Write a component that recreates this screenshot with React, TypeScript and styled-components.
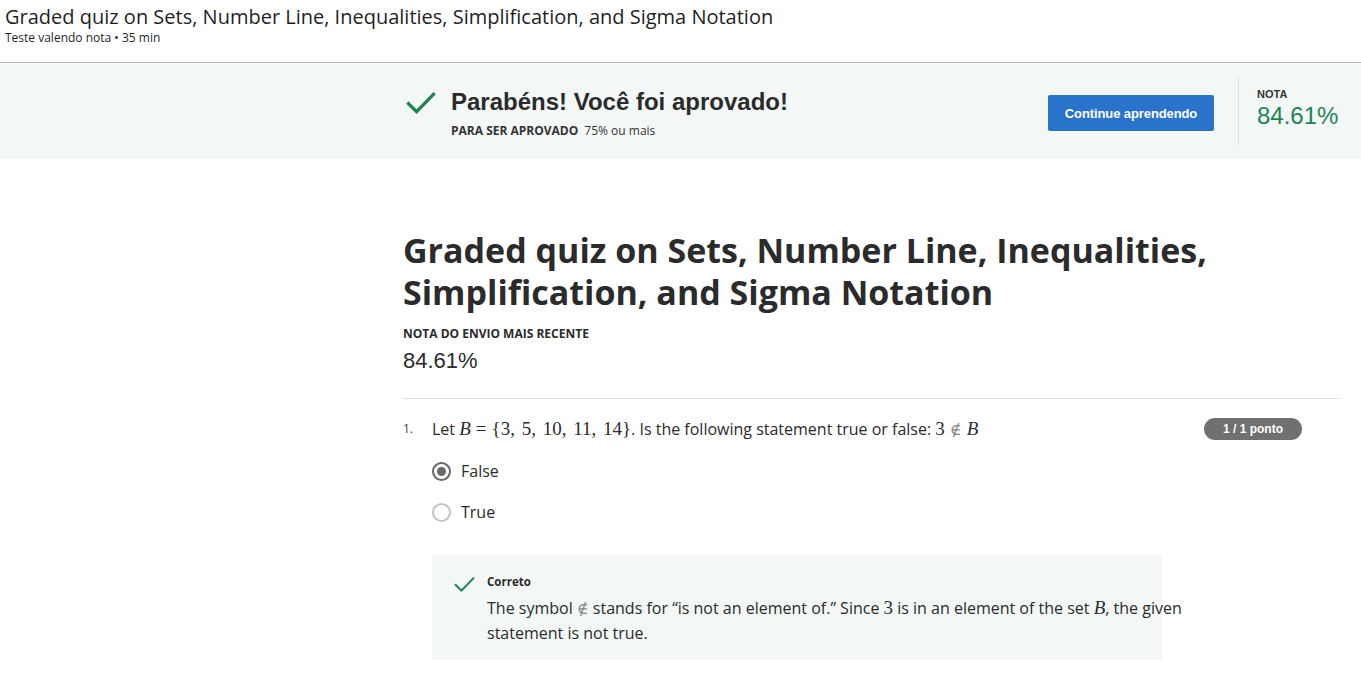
import React from "react";
import styled, { createGlobalStyle } from "styled-components";

const Global = createGlobalStyle`
  html, body { margin: 0; padding: 0; background: #fff; }
  body { font-family: "Open Sans", "Noto Sans", sans-serif; color: #1f1f1f; }
  * { box-sizing: border-box; }
`;

const Page = styled.div`
  width: 1361px;
  min-height: 673px;
  overflow: hidden;
`;

const Header = styled.header`
  height: 63px;
  padding: 3px 0 0 5px;
  border-bottom: 1px solid #b8b8b8;
`;

const HeaderTitle = styled.h1`
  margin: 0;
  font-size: 20px;
  font-weight: 400;
  line-height: 27px;
  color: #1f1f1f;
`;

const HeaderMeta = styled.div`
  font-size: 12px;
  line-height: 16px;
  color: #1f1f1f;
`;

const Banner = styled.section`
  height: 96px;
  background: #f3f8f7;
  display: flex;
  align-items: center;
  padding-left: 406px;
`;

const BannerMain = styled.div`
  display: flex;
  align-items: flex-start;
  gap: 15px;
  width: 642px;
  padding-top: 4px;
`;

const BannerText = styled.div`
  display: flex;
  flex-direction: column;
`;

const BannerHeading = styled.div`
  font-family: "Liberation Sans", Arial, sans-serif;
  font-weight: 700;
  font-size: 24px;
  line-height: 28px;
  color: #2b2b2b;
`;

const BannerSub = styled.div`
  margin-top: 7px;
  font-size: 12px;
  line-height: 16px;
  color: #333;
  b { font-weight: 700; margin-right: 6px; }
`;

const PrimaryButton = styled.button`
  margin-top: 4px;
  width: 166px;
  height: 36px;
  border: none;
  border-radius: 2px;
  background: #2a73cc;
  color: #fff;
  font-family: "Liberation Sans", Arial, sans-serif;
  font-weight: 700;
  font-size: 13px;
  letter-spacing: -0.1px;
  cursor: pointer;
`;

const GradeBox = styled.div`
  margin-left: 24px;
  height: 68px;
  border-left: 1px solid #dde3e1;
  padding: 11px 0 0 18px;
  display: flex;
  flex-direction: column;
`;

const GradeLabel = styled.div`
  font-family: "Liberation Sans", Arial, sans-serif;
  font-weight: 700;
  font-size: 11px;
  line-height: 12px;
  color: #333;
`;

const GradeValue = styled.div`
  margin-top: 2px;
  font-family: "Liberation Sans", Arial, sans-serif;
  font-size: 24px;
  line-height: 28px;
  color: #1f8354;
`;

const Content = styled.main`
  margin-left: 403px;
  width: 936px;
  padding-top: 70px;
`;

const Title = styled.h2`
  margin: 0;
  font-size: 34px;
  font-weight: 700;
  line-height: 42px;
  color: #2b2b2b;
`;

const SmallCaps = styled.div`
  margin-top: 13px;
  font-size: 12px;
  font-weight: 700;
  line-height: 16px;
  color: #2b2b2b;
`;

const Score = styled.div`
  font-family: "Liberation Sans", Arial, sans-serif;
  font-size: 22px;
  line-height: 26px;
  color: #2b2b2b;
  margin-top: 6px;
`;

const Divider = styled.hr`
  margin: 24px 0 0;
  border: none;
  border-top: 1px solid #dedede;
`;

const QuestionRow = styled.div`
  display: flex;
  align-items: flex-start;
  padding-top: 17px;
`;

const QNumber = styled.div`
  width: 29px;
  font-size: 12px;
  line-height: 26px;
  color: #444;
`;

const QBody = styled.div`
  flex: 1;
`;

const QText = styled.div`
  font-size: 16px;
  line-height: 26px;
  color: #2b2b2b;
`;

const M = styled.span<{ $i?: boolean }>`
  font-family: "Liberation Serif", "Times New Roman", serif;
  font-size: 19px;
  line-height: 1;
  word-spacing: 2px;
  font-style: ${(p) => (p.$i ? "italic" : "normal")};
`;

const Rel = styled.span`
  font-family: "Liberation Serif", "Times New Roman", serif;
  font-size: 19px;
  line-height: 1;
  margin: 0 5px;
`;

const MSym = styled.span`
  font-family: "DejaVu Serif", serif;
  font-size: 16px;
  line-height: 1;
  color: #888;
`;

const Badge = styled.div`
  margin-right: 37px;
  margin-top: 2px;
  height: 22px;
  padding: 0 19px;
  border-radius: 11px;
  background: #707070;
  color: #fff;
  font-family: "Liberation Sans", Arial, sans-serif;
  font-weight: 700;
  font-size: 12px;
  line-height: 22px;
  white-space: nowrap;
`;

const Options = styled.div`
  margin-top: 18px;
  display: flex;
  flex-direction: column;
  gap: 19px;
`;

const Option = styled.label`
  display: flex;
  align-items: center;
  gap: 10px;
  font-size: 16px;
  line-height: 22px;
  color: #2b2b2b;
`;

const Radio = styled.span<{ $checked?: boolean }>`
  width: 19px;
  height: 19px;
  border-radius: 50%;
  border: 2px solid ${(p) => (p.$checked ? "#666" : "#c4c4c4")};
  display: flex;
  align-items: center;
  justify-content: center;
  &::after {
    content: "";
    width: 9px;
    height: 9px;
    border-radius: 50%;
    background: ${(p) => (p.$checked ? "#6a6a6a" : "transparent")};
  }
`;

const Feedback = styled.div`
  margin-top: 32px;
  width: 730px;
  background: #f3f8f6;
  padding: 19px 0 14px 22px;
  display: flex;
  gap: 12px;
  overflow: visible;
`;

const FeedbackBody = styled.div`
  flex: none;
  width: 710px;
  display: flex;
  flex-direction: column;
`;

const FeedbackTitle = styled.div`
  font-size: 11.5px;
  font-weight: 700;
  line-height: 16px;
  color: #2b2b2b;
`;

const FeedbackText = styled.div`
  margin-top: 6px;
  font-size: 16px;
  line-height: 25px;
  color: #2b2b2b;
`;

const Check = ({ size, w }: { size: number; w: number }) => (
  <svg width={size} height={size} viewBox="0 0 24 24" fill="none" style={{ flex: "none" }}>
    <path d="M2 12.5l6.5 6.5L22 5" stroke="#1f8354" strokeWidth={w} strokeLinecap="square" />
  </svg>
);

export default function App() {
  return (
    <Page>
      <Global />
      <Header>
        <HeaderTitle>Graded quiz on Sets, Number Line, Inequalities, Simplification, and Sigma Notation</HeaderTitle>
        <HeaderMeta>Teste valendo nota • 35 min</HeaderMeta>
      </Header>
      <Banner>
        <BannerMain>
          <Check size={30} w={2.6} />
          <BannerText>
            <BannerHeading>Parabéns! Você foi aprovado!</BannerHeading>
            <BannerSub>
              <b>PARA SER APROVADO</b>75% ou mais
            </BannerSub>
          </BannerText>
        </BannerMain>
        <PrimaryButton>Continue aprendendo</PrimaryButton>
        <GradeBox>
          <GradeLabel>NOTA</GradeLabel>
          <GradeValue>84.61%</GradeValue>
        </GradeBox>
      </Banner>
      <Content>
        <Title>
          Graded quiz on Sets, Number Line, Inequalities,
          <br />
          Simplification, and Sigma Notation
        </Title>
        <SmallCaps>NOTA DO ENVIO MAIS RECENTE</SmallCaps>
        <Score>84.61%</Score>
        <Divider />
        <QuestionRow>
          <QNumber>1.</QNumber>
          <QBody>
            <QText>
              Let <M $i>B</M><Rel>=</Rel><M>{"{"}3, 5, 10, 11, 14{"}"}</M>. Is the following statement true or false:{" "}
              <M>3</M><Rel><MSym>∉</MSym></Rel><M $i>B</M>
            </QText>
            <Options>
              <Option>
                <Radio $checked />
                False
              </Option>
              <Option>
                <Radio />
                True
              </Option>
            </Options>
            <Feedback>
              <Check size={21} w={2.4} />
              <FeedbackBody>
                <FeedbackTitle>Correto</FeedbackTitle>
                <FeedbackText>
                  The symbol <MSym>∉</MSym> stands for “is not an element of.” Since <M>3</M> is in an element of the set{" "}
                  <M $i>B</M>, the given
                  <br />
                  statement is not true.
                </FeedbackText>
              </FeedbackBody>
            </Feedback>
          </QBody>
          <Badge>1 / 1 ponto</Badge>
        </QuestionRow>
      </Content>
    </Page>
  );
}
